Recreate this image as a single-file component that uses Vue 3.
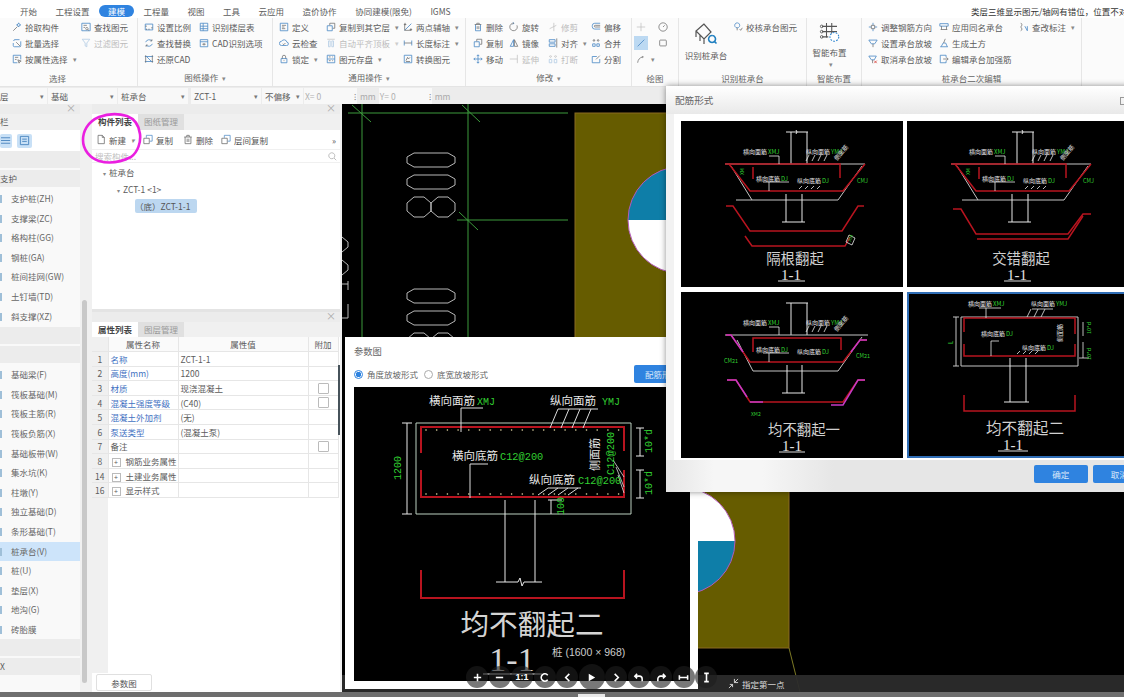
<script setup>
// GTJ 建模界面 + 参数图 / 配筋形式 两个弹窗
const tabs = ['开始', '工程设置', '建模', '工程量', '视图', '工具', '云应用', '造价协作', '协同建模(限免)', 'IGMS']

// 每个图标两层路径：蓝色主体、灰色细节 (12x12)
const icons = {
  pick: ['M8 1l.8 1.7 1.7.8-1.7.8L8 6l-.8-1.7-1.7-.8 1.7-.8z', 'M1.5 10.5L6.5 5.5'],
  batch: ['M2 3.5A1.5 1.5 0 0 1 3.5 2H9M1.5 6v3A1.5 1.5 0 0 0 3 10.5h6A1.5 1.5 0 0 0 10.5 9V4', 'M5 5l5 5'],
  attr: ['M6.5 10.5h-5v-9h9v5', 'M7 7l4 1.5-1.8.7-.7 1.8zM3.5 4h4M3.5 6.5h2'],
  find: ['M1 1.5h10v9H1z', 'M3 4h4M3 6.5h2M7 6.5a1.4 1.4 0 1 0 .1 0M8 9l1.5 1'],
  filter: ['M1.5 1.5h9L7 6v4.5L5 9.5V6z', ''],
  scale: ['M1.5 2.5h9v7h-9z', 'M1.5 5h2M8.5 7h2M3 9.5V8M6 9.5V8'],
  table: ['M1.5 1.5h9v9h-9zM1.5 5h9M1.5 8h9M5 1.5v9', ''],
  replace: ['M9.5 3.5A4.5 4.5 0 0 0 2 5M2.5 8.5A4.5 4.5 0 0 0 10 7', 'M9.5 1.5v2h-2M2.5 10.5v-2h2'],
  cadopt: ['M1.5 2h9v8.5h-9zM1.5 4.5h9', 'M4 7.5h4M6 6v3'],
  restore: ['M1 3h10M1 9h10M3 3l6 6', 'M2 1.5v9M10 1.5v9'],
  define: ['M1.5 1.5h9v9h-9z', 'M3.5 4h5M3.5 6h3M3.5 8h4'],
  cloud: ['M3 9a2.5 2.5 0 0 1 0-5 3.5 3.5 0 0 1 6.5 1 2 2 0 0 1-.5 4z', 'M4.5 7l1.2 1 2-2'],
  lock: ['M2.5 5.5h7v5h-7z', 'M4 5.5v-2a2 2 0 0 1 4 0v2M6 7.5v1'],
  copy: ['M1.5 4.5h6v6h-6z', 'M4.5 4V1.5h6v6H8'],
  flat: ['M3 3.5h2v7H3zM7 3.5h2v7H7z', 'M1.5 1.5h9'],
  save: ['M1.5 1.5h9v9h-9zM1.5 6h9', 'M3.5 3.5h2M3.5 8h2M7.5 3.5h1M7.5 8h1'],
  axis: ['M2 10l8-8', 'M1 3h3M2.5 1v3M8 9h3M9.5 7.5v3M2 10h8M2 2v8'],
  dim: ['M1.5 3v6M10.5 3v6', 'M1.5 6h9'],
  convert: ['M1.5 1.5h9v9h-9z', 'M3.5 8l2-4 1 2 2-2M3.5 9h5'],
  del: ['M3 3v7.5h6V3', 'M2 3h8M4.5 3V1.5h3V3M5 5v3.5M7 5v3.5'],
  move: ['M6 1v10M1 6h10M4.5 2.5L6 1l1.5 1.5M4.5 9.5L6 11l1.5-1.5M2.5 4.5L1 6l1.5 1.5M9.5 4.5L11 6 9.5 7.5', ''],
  rotate: ['M4.5.5L6 1.5 4.5 3', 'M9.5 4A4.5 4.5 0 1 1 6 1.5'],
  mirror: ['M5.5 2v8h-4z', 'M6.5 2v8h4z'],
  trim: ['', 'M7 1v10M2 8l8-4'],
  extend: ['', 'M10 1v10M1 6h9'],
  brk: ['M1.5 6.5h3v4h-3zM7.5 6.5h3v4h-3z', 'M3 2a1 1 0 1 0 .1 0M9 2a1 1 0 1 0 .1 0'],
  alignH: ['M1.5 2h7v3h-7zM1.5 7h7v3h-7z', 'M10.5.5v11'],
  offset: ['M11 1.5H4.5a3 3 0 0 0-3 3v1a3 3 0 0 0 3 3H11', 'M11 4H5a1 1 0 0 0 0 2h6'],
  merge: ['M2 7h3v3H2zM7 7h3v3H7z', 'M3.5 2a1 1 0 1 0 .1 0M8.5 2a1 1 0 1 0 .1 0'],
  split: ['M10.5 6v4.5h-9V3H7', 'M6 6.5L10.5 2'],
  plus: ['', 'M6 1v10M1 6h10'],
  clock: ['', 'M6 1a5 5 0 1 0 .1 0M6 6l2-2'],
  line: ['M2 10l8-8', ''],
  rect: ['', 'M3 2.5h6a1 1 0 0 1 1 1v5a1 1 0 0 1-1 1H3a1 1 0 0 1-1-1v-5a1 1 0 0 1 1-1z'],
  arc: ['', 'M2 10.5A8 8 0 0 1 8 3.5M8 3a.6.6 0 1 0 .1 0'],
  check: ['M5 1a3 3 0 1 0 .1 0', 'M5 7v3M8 8.5L9.2 10l2-3'],
  adjDir: ['M1 6h3M8 6h3M6 1v3M6 8v3', 'M4 4h4v4H4z'],
  same: ['M1 2h10v3H1z', 'M3 5v4M9 5v4M2 9h8'],
  slope: ['M1 2.5h10L8 7H4z', 'M6 7v4'],
  noslope: ['M1 2.5h9L7.5 7H4z', 'M5.5 7v4'],
  earth: ['M1.5 10.5h9M2.5 10.5L5 6h3l2 4.5', 'M7.5 1L5.5 6'],
  strong: ['M8.5 4V1.5h-7v9h7V8', 'M5 6h6M9 4l2 2-2 2'],
  tag: ['M7 5l3 5.5M10 5v5.5', 'M2 1.5c2 0 2 3 0 4.5 2 1.5 2 4 0 4.5']
}

const groups = [
  { w: 138, pad: 12, label: '选择', labelPad: 22, cols: [
    { w: 69, items: [{ t: '拾取构件', i: 'pick' }, { t: '批量选择', i: 'batch' }, { t: '按属性选择', i: 'attr', dd: true }] },
    { items: [{ t: '查找图元', i: 'find' }, { t: '过滤图元', i: 'filter', off: true }] }
  ] },
  { w: 135, pad: 6, label: '图纸操作', dd: true, cols: [
    { w: 55, items: [{ t: '设置比例', i: 'scale' }, { t: '查找替换', i: 'replace' }, { t: '还原CAD', i: 'restore' }] },
    { items: [{ t: '识别楼层表', i: 'table' }, { t: 'CAD识别选项', i: 'cadopt' }] }
  ] },
  { w: 193, pad: 6, label: '通用操作', dd: true, cols: [
    { w: 47, items: [{ t: '定义', i: 'define' }, { t: '云检查', i: 'cloud' }, { t: '锁定', i: 'lock', dd: true }] },
    { w: 77, items: [{ t: '复制到其它层', i: 'copy', dd: true }, { t: '自动平齐顶板', i: 'flat', off: true, dd: true }, { t: '图元存盘', i: 'save', dd: true }] },
    { items: [{ t: '两点辅轴', i: 'axis', dd: true }, { t: '长度标注', i: 'dim', dd: true }, { t: '转换图元', i: 'convert' }] }
  ] },
  { w: 166, pad: 7, label: '修改', dd: true, cols: [
    { w: 36, items: [{ t: '删除', i: 'del' }, { t: '复制', i: 'copy' }, { t: '移动', i: 'move' }] },
    { w: 39, items: [{ t: '旋转', i: 'rotate' }, { t: '镜像', i: 'mirror' }, { t: '延伸', i: 'extend', off: true }] },
    { w: 43, items: [{ t: '修剪', i: 'trim', off: true }, { t: '对齐', i: 'alignH', dd: true }, { t: '打断', i: 'brk', off: true }] },
    { items: [{ t: '偏移', i: 'offset' }, { t: '合并', i: 'merge' }, { t: '分割', i: 'split' }] }
  ] },
  { w: 47, pad: 4, label: '绘图', cols: [
    { w: 22, items: [{ i: 'plus', off: true }, { i: 'line', on: true }, { i: 'arc', dd: true }] },
    { items: [{ i: 'clock' }, { i: 'rect' }] }
  ] },
  { w: 128, label: '识别桩承台', big: { t: '识别桩承台', kind: 'recog', w: 54 }, cols: [
    { items: [{ t: '校核承台图元', i: 'check' }] }
  ] },
  { w: 55, label: '智能布置', big: { t: '智能布置', kind: 'smart', w: 45, dd: true }, cols: [] },
  { w: 220, pad: 6, label: '桩承台二次编辑', cols: [
    { w: 71, items: [{ t: '调整钢筋方向', i: 'adjDir' }, { t: '设置承台放坡', i: 'slope' }, { t: '取消承台放坡', i: 'noslope', x: true }] },
    { w: 80, items: [{ t: '应用同名承台', i: 'same' }, { t: '生成土方', i: 'earth' }, { t: '编辑承台加强筋', i: 'strong' }] },
    { items: [{ t: '查改标注', i: 'tag', dd: true }] }
  ] }
]

const navTop = ['支护桩(ZH)', '支撑梁(ZC)', '格构柱(GG)', '钢桩(GA)', '桩间挂网(GW)', '土钉墙(TD)', '斜支撑(XZ)']
const navBottom = ['基础梁(F)', '筏板基础(M)', '筏板主筋(R)', '筏板负筋(X)', '基础板带(W)', '集水坑(K)', '柱墩(Y)', '独立基础(D)', '条形基础(T)', '桩承台(V)', '桩(U)', '垫层(X)', '地沟(G)', '砖胎膜']

const props = [
  { n: 1, name: '名称', val: 'ZCT-1-1', link: true },
  { n: 2, name: '高度(mm)', val: '1200', link: true },
  { n: 3, name: '材质', val: '现浇混凝土', link: true, box: true },
  { n: 4, name: '混凝土强度等级', val: '(C40)', link: true, box: true },
  { n: 5, name: '混凝土外加剂', val: '(无)', link: true },
  { n: 6, name: '泵送类型', val: '(混凝土泵)', link: true },
  { n: 7, name: '备注', val: '', box: true },
  { n: 8, name: '钢筋业务属性', val: '', plus: true },
  { n: 14, name: '土建业务属性', val: '', plus: true },
  { n: 16, name: '显示样式', val: '', plus: true }
]

// CAD 画布上的灰色八边形
const octY = [49, 71, 185, 207]
const octPairY = [93, 229]
const octPts = (y) => `72,${y} 106,${y} 113,${y + 4} 113,${y + 10} 106,${y + 14} 72,${y + 14} 65,${y + 10} 65,${y + 4}`
const octSmall = (x, y) => `${x + 7},${y} ${x + 17},${y} ${x + 24},${y + 6} ${x + 24},${y + 14} ${x + 17},${y + 20} ${x + 7},${y + 20} ${x},${y + 14} ${x},${y + 6}`

const W = '#e8e8e8'
const G = '#c4c4c4'
const R = '#b8141f'
const M = '#c53ac5'
const L = '#32d032'

const commonLabels = (y1 = 33, y2 = 60, y3 = 62, dx = 0) => [
  { x: 62 + dx, y: y1, t: '横向面筋', c: W, s: 6 },
  { x: 87 + dx, y: y1, t: 'XMJ', c: L, s: 6 },
  { x: 125 + dx, y: y1, t: '纵向面筋', c: W, s: 6 },
  { x: 150 + dx, y: y1, t: 'YMJ', c: L, s: 6 },
  { x: 75 + dx, y: y2, t: '横向底筋', c: W, s: 6 },
  { x: 100 + dx, y: y2, t: 'DJ', c: L, s: 6 },
  { x: 116 + dx, y: y3, t: '纵向底筋', c: W, s: 6 },
  { x: 141 + dx, y: y3, t: 'DJ', c: L, s: 6 }
]

const slabCommon = [
  { d: 'M105 11H127M110 11V43M126 11V43M115 9l1 2-1 2', c: W, w: 1 },
  { d: 'M44 43H184M50 45L71 79H55M71 79H157L181 45', c: G, w: 1 },
  { d: 'M44 43H159V57M72 46V58', c: R, w: 1.5 },
  { d: 'M48 43L69 70H162L184 43', c: R, w: 1.5 },
  { d: 'M105 73V101M121 73V101M101 101H124', c: W, w: 1 },
  { d: 'M98 35V43M88 35H98M125 40l3-6M131 40l3-6M137 40l3-6M143 40l3-6', c: W, w: .8 },
  { d: 'M88 61V70M82 61H108M118 68l3-3M124 68l3-3M130 68l3-3M136 68l3-3', c: W, w: .8 }
]

const thumbs = [
  {
    title: '隔根翻起', tx: 114, ty: 143, ux: [97, 124], uy: 160, nx: 110, ny: 159,
    lines: [
      ...slabCommon,
      { d: 'M45 85H52L69 110H161L177 85H183', c: R, w: 1.5 },
      { d: 'M64 115L71 125H164L169 116', c: R, w: 1.5 },
      { d: 'M168 114l6 3-3 7-6-3z', c: W, w: .8 }
    ],
    labels: [...commonLabels(), { x: 170, y: 121, t: 'XM', c: L, s: 5, r: -70 }, { x: 63, y: 54, t: 'XM', c: L, s: 5, r: -90 }, { x: 156, y: 40, t: '侧面筋', c: W, s: 6, r: -50 }, { x: 176, y: 62, t: 'CMJ', c: L, s: 5.5 }]
  },
  {
    title: '交错翻起', tx: 114, ty: 143, ux: [97, 124], uy: 160, nx: 110, ny: 159,
    lines: [
      ...slabCommon,
      { d: 'M46 88H54L69 113H161L176 93H184', c: R, w: 1.5 },
      { d: 'M70 118H161L176 95', c: R, w: 1.5 }
    ],
    labels: [...commonLabels(), { x: 63, y: 54, t: 'XM', c: L, s: 5, r: -90 }, { x: 156, y: 40, t: '侧面筋', c: W, s: 6, r: -50 }, { x: 176, y: 62, t: 'CMJ', c: L, s: 5.5 }]
  },
  {
    title: '均不翻起一', tx: 123, ty: 143, ux: [98, 124], uy: 160, nx: 111, ny: 159,
    lines: [
      { d: 'M105 11H127M110 11V43M126 11V43', c: W, w: 1 },
      { d: 'M44 43H187M56 48L72 79H157L181 45', c: G, w: 1 },
      { d: 'M45 43H50L69 70H162L179 48H186', c: R, w: 1.5 },
      { d: 'M45 43H50L62 60M170 60L179 48H186', c: M, w: 1.5 },
      { d: 'M72 60V46H160V58', c: R, w: 1.5 },
      { d: 'M106 73V101M121 73V101M101 101H124', c: W, w: 1 },
      { d: 'M46 88H55L69 110H162L177 88H184', c: R, w: 1.5 },
      { d: 'M46 88H55L66 105M69 110H82M150 113H162L177 88H184', c: M, w: 1.5 },
      { d: 'M98 35V43M88 35H98M125 40l3-6M131 40l3-6M137 40l3-6M143 40l3-6M88 61V70M82 61H108', c: W, w: .8 }
    ],
    labels: [...commonLabels(), { x: 43, y: 71, t: 'CM21', c: L, s: 5.5 }, { x: 175, y: 66, t: 'CM21', c: L, s: 5.5 }, { x: 70, y: 124, t: 'XM2', c: L, s: 5 }, { x: 156, y: 40, t: '侧面筋', c: W, s: 6, r: -50 }]
  },
  {
    title: '均不翻起二', tx: 118, ty: 142, ux: [91, 121], uy: 159, nx: 106, ny: 158, big: true,
    lines: [
      { d: 'M54 25H171V74H54ZM49 25V74M46 25H52M46 74H52', c: G, w: 1 },
      { d: 'M57 40V26H168V42M57 52V64H168V52', c: R, w: 1.5 },
      { d: 'M103 66V110M119 66V110M97 110H122', c: W, w: 1 },
      { d: 'M57 103V119H168V103', c: R, w: 1.5 },
      { d: 'M79 16V26M72 16H94M120 25l4-8M127 25l4-8M134 25l4-8M125 17H146M84 49V64M84 49H92M110 62l3-3M116 62l3-3M122 62l3-3M128 62l3-3', c: W, w: .8 },
      { d: 'M176 30V44M176 50V66M172 66H182', c: W, w: .8 }
    ],
    labels: [...commonLabels(14, 44, 58, -1), { x: 46, y: 52, t: 'L', c: L, s: 6, r: -90 }, { x: 184, y: 42, t: '10*d', c: L, s: 5.5, r: -90 }, { x: 184, y: 68, t: '10*d', c: L, s: 5.5, r: -90 }, { x: 155, y: 50, t: '侧面筋', c: W, s: 6, r: -90 }]
  }
]

// 参数图主图
const paramLines = [
  { d: 'M62 36H277V127H62Z', c: '#bcd0c0', w: 1 },
  { d: 'M67 66V40H270V64M67 83V110H270V83', c: R, w: 2 },
  { d: 'M151 113V195M181 113V195M142 195H164l2-4 2 8 2-4H188', c: W, w: 1 },
  { d: 'M67 183V211H270V183', c: R, w: 2 },
  { d: 'M53 36V127M48 36H58M48 127H58', c: W, w: 1 },
  { d: 'M286 41V69M282 41H290M282 69H290M286 83V111M282 83H290M282 111H290', c: W, w: 1 },
  { d: 'M194 113H208M197 113V127', c: W, w: 1 },
  { d: 'M107 21H129M107 21V45M116 77H134M116 77V111', c: '#ddd', w: 1 },
  { d: 'M204 22H244M204 22L196 41M215 22L207 41M226 22L218 41M237 22L229 41', c: '#ddd', w: 1 },
  { d: 'M194 101H227M194 101L184 108M204 101L194 108M214 101L204 108M224 101L214 108', c: '#ddd', w: 1 },
  { d: 'M259 73L270 90M262 80L270 100M264 88L270 106', c: '#ddd', w: .8 },
  { d: 'M129 287H188', c: W, w: 1 }
]
const paramLabels = [
  { x: 75, y: 18, t: '横向面筋', c: W, s: 11.5 },
  { x: 123, y: 18, t: 'XMJ', c: L, s: 10, m: true },
  { x: 196, y: 18, t: '纵向面筋', c: W, s: 11.5 },
  { x: 248, y: 18, t: 'YMJ', c: L, s: 10, m: true },
  { x: 98, y: 73, t: '横向底筋', c: W, s: 11.5 },
  { x: 146, y: 73, t: 'C12@200', c: L, s: 10.3, m: true },
  { x: 175, y: 97, t: '纵向底筋', c: W, s: 11.5 },
  { x: 224, y: 97, t: 'C12@200', c: L, s: 10.3, m: true },
  { x: 245, y: 84, t: '侧面筋', c: W, s: 11, r: -90 },
  { x: 260, y: 88, t: 'C12@200', c: L, s: 10.3, r: -90, m: true },
  { x: 47, y: 93, t: '1200', c: L, s: 10, r: -90, m: true },
  { x: 298, y: 66, t: '10*d', c: L, s: 10, r: -90, m: true },
  { x: 298, y: 108, t: '10*d', c: L, s: 10, r: -90, m: true },
  { x: 210, y: 128, t: '100', c: L, s: 10, r: -90, m: true }
]
const dots = Array.from({ length: 19 }, (_, i) => 72 + i * 10.7)
</script>

<template>
  <div class="screen">
    <div class="tabs">
      <span v-for="t in tabs" :key="t" :class="['tab', { active: t === '建模' }]">{{ t }}</span>
      <span class="notice">类层三维显示图元/轴网有错位，位置不对如</span>
    </div>

    <div class="ribbon">
      <section v-for="g in groups" :key="g.label" class="group" :style="{ width: g.w + 'px' }">
        <div class="group-body" :style="{ paddingLeft: (g.pad || 0) + 'px' }">
          <div v-if="g.big" class="big" :style="{ width: g.big.w + 'px' }">
            <svg v-if="g.big.kind === 'recog'" width="24" height="22" viewBox="0 0 24 22" class="big-ic">
              <path d="M10 1L2 8l8 8 7-7zM2 8v6M10 16v5M6 12v6" fill="none" stroke="#555" stroke-width="1.2" />
              <path d="M18 12.5a3.5 3.5 0 1 0 .1 0M20.5 18.5l2 2" fill="none" stroke="#1f7fc0" stroke-width="1.6" />
            </svg>
            <svg v-else width="24" height="24" viewBox="0 0 24 24" class="big-ic">
              <path d="M8 1v17M14 1v17M3 5h17M3 11h17M3 17h7" fill="none" stroke="#555" stroke-width="1.2" />
              <circle cx="2.5" cy="5" r="1.5" fill="none" stroke="#555" />
              <circle cx="2.5" cy="11" r="1.5" fill="none" stroke="#555" />
              <circle cx="2.5" cy="17" r="1.5" fill="none" stroke="#555" />
              <circle cx="17" cy="17" r="5" fill="#fff" stroke="#2f86d0" stroke-dasharray="2 1.5" stroke-width="1.3" />
            </svg>
            <span>{{ g.big.t }}</span>
            <span v-if="g.big.dd" class="caret">▾</span>
          </div>
          <div v-for="(c, ci) in g.cols" :key="ci" class="col" :style="c.w ? { width: c.w + 'px' } : null">
            <div v-for="(it, ii) in c.items" :key="ii" :class="['cmd', { off: it.off, on: it.on }]">
              <svg class="ic" viewBox="0 0 12 12">
                <path :d="icons[it.i][0]" class="ic-a" />
                <path :d="icons[it.i][1]" class="ic-b" />
                <path v-if="it.x" d="M7.5 8l3 3M10.5 8l-3 3" class="ic-x" />
              </svg>
              <span v-if="it.t">{{ it.t }}</span>
              <span v-if="it.dd" class="caret">▾</span>
            </div>
          </div>
        </div>
        <div class="group-label" :style="g.labelPad ? { paddingRight: g.labelPad + 'px' } : null">
          {{ g.label }}<span v-if="g.dd" class="caret"> ▾</span>
        </div>
      </section>
    </div>

    <div class="optbar">
      <div class="drop w-first">层<i>▾</i></div>
      <div class="drop w-a">基础<i>▾</i></div>
      <div class="drop w-b">桩承台<i>▾</i></div>
      <div class="drop w-c">ZCT-1<i>▾</i></div>
      <div class="drop w-d">不偏移<i>▾</i></div>
      <div class="num"><em>X=</em> <em>0</em><b>⁝</b></div>
      <span class="unit">mm</span>
      <div class="num"><em>Y=</em> <em>0</em><b>⁝</b></div>
      <span class="unit">mm</span>
    </div>

    <div class="work">
      <aside class="nav">
        <div class="nav-list">
          <div class="strip"><span class="close">×</span></div>
          <div class="nav-title">栏</div>
          <div class="nav-tools">
            <span class="toggle t-a">
              <svg viewBox="0 0 12 12" width="11" height="11"><path d="M0 3h10M0 6h10M0 9h10" stroke="#4a86c0" fill="none" /></svg>
            </span>
            <span class="toggle t-b">
              <svg viewBox="0 0 12 12" width="11" height="11"><path d="M1.5 1.5h9v9h-9zM3.5 4.5h5M3.5 7h5" stroke="#4a86c0" fill="none" /></svg>
            </span>
          </div>
          <div class="nav-head first"></div>
          <div class="nav-head">支护</div>
          <div v-for="n in navTop" :key="n" class="nav-item">{{ n }}</div>
          <div class="nav-head gap"></div>
          <div class="nav-head"></div>
          <div v-for="n in navBottom" :key="n" :class="['nav-item', { sel: n === '桩承台(V)' }]">{{ n }}</div>
          <div class="nav-head"></div>
          <div class="nav-head">X</div>
        </div>
        <div class="nav-gutter"><div class="nav-thumb"></div></div>
      </aside>

      <div class="mid">
        <div class="panel upper">
          <div class="strip"><span class="close">×</span></div>
          <div class="pane-tabs">
            <span class="pane-tab active">构件列表</span>
            <span class="pane-tab">图纸管理</span>
          </div>
          <div class="toolbar">
            <span class="tb new">
              <svg class="tb-ic" viewBox="0 0 12 12"><path d="M2.5 1h5L10 3.5V11H2.5zM7.5 1v2.5H10" /></svg>新建<i class="caret">▾</i>
            </span>
            <span class="tb copy">
              <svg class="tb-ic" viewBox="0 0 12 12"><path d="M1 4.5h6.5V11H1z" /><path class="blue" d="M4 4V1h7v7H8" /></svg>复制
            </span>
            <span class="tb del">
              <svg class="tb-ic" viewBox="0 0 12 12"><path d="M1.5 3h9M4.5 3V1h3v2M2.5 3v8h7V3M5 5v4M7 5v4" /></svg>删除
            </span>
            <span class="tb">
              <svg class="tb-ic" viewBox="0 0 12 12"><path d="M1 4.5h6.5V11H1z" /><path class="blue" d="M4 4V1h7v7H8" /></svg>层间复制
            </span>
            <span class="more">»</span>
          </div>
          <div class="search">
            <span>搜索构件...</span>
            <svg viewBox="0 0 12 12" width="9" height="9"><path d="M5 1a4 4 0 1 0 .1 0M8 8l3 3" fill="none" stroke="#aaa" /></svg>
          </div>
          <div class="tree">
            <div class="node n1"><i>▾</i>桩承台</div>
            <div class="node n2"><i>▾</i>ZCT-1 &lt;1&gt;</div>
            <div class="node n3"><span>（底）ZCT-1-1</span></div>
          </div>
        </div>

        <div class="panel lower">
          <div class="strip"><span class="close">×</span></div>
          <div class="pane-tabs">
            <span class="pane-tab active">属性列表</span>
            <span class="pane-tab">图层管理</span>
          </div>
          <table class="attr">
            <colgroup>
              <col class="c-n"><col class="c-name"><col class="c-val"><col class="c-add">
            </colgroup>
            <thead>
              <tr><th></th><th>属性名称</th><th>属性值</th><th>附加</th></tr>
            </thead>
            <tbody>
              <tr v-for="p in props" :key="p.n">
                <td class="no">{{ p.n }}</td>
                <td :class="{ link: p.link }"><span v-if="p.plus" class="plus">+</span>{{ p.name }}</td>
                <td>{{ p.val }}</td>
                <td class="box"><span v-if="p.box" class="chk"></span></td>
              </tr>
            </tbody>
          </table>
          <div class="attr-fill"><div class="attr-fill-no"></div></div>
          <div class="attr-foot"><button class="ghost">参数图</button></div>
          <div class="edge-bar"></div>
        </div>
      </div>

      <div class="canvas">
        <svg class="cad" width="782" height="588" viewBox="0 0 782 588">
          <rect x="233" y="9" width="214" height="535" fill="#665c00" stroke="#8a6a20" />
          <path d="M286 116A53.5 53.5 0 0 1 393 116Z" fill="#0e7ea8" />
          <path d="M286 116A53.5 53.5 0 0 0 393 116Z" fill="#fff" />
          <circle cx="339.5" cy="116" r="53.5" fill="none" stroke="#b45ab8" />
          <path d="M286 437A53.5 53.5 0 0 1 393 437Z" fill="#fff" />
          <path d="M286 437A53.5 53.5 0 0 0 393 437Z" fill="#0e7ea8" />
          <circle cx="339.5" cy="437" r="53.5" fill="none" stroke="#b45ab8" />
          <path d="M447 544L458 588" stroke="#7d7a25" fill="none" />
          <g stroke="#3c9a3c" fill="none">
            <path d="M20 0V340M126 0V340M6 9H226M115 116H226" />
            <path d="M10 1L29 18M120 1L138 18M117 108L136 126" />
          </g>
          <g stroke="#b8b8b8" fill="none">
            <polygon v-for="y in octY" :key="y" :points="octPts(y)" />
            <template v-for="y in octPairY" :key="y">
              <polygon :points="octSmall(65, y)" />
              <polygon :points="octSmall(89, y)" />
            </template>
            <path d="M0 133L6 138 6 143 0 148M0 156L6 161 6 166 0 171M0 180H6M6 177V186M0 214H6V200" />
          </g>
        </svg>
        <div class="hint">
          <svg viewBox="0 0 12 12" width="11" height="11"><path d="M1 11L5 7M2 7h3v3M11 1L7 5M7 1v4h4" stroke="#ddd" fill="none" /></svg>
          <span>指定第一点</span>
        </div>
      </div>
    </div>
    <div class="foot"></div>

    <!-- 参数图弹窗 -->
    <div class="dlg-param">
      <div class="dlg-title">参数图</div>
      <div class="radios">
        <label class="radio sel"><i></i>角度放坡形式</label>
        <label class="radio"><i></i>底宽放坡形式</label>
        <button class="primary wide">配筋形式</button>
      </div>
      <svg class="param-pic" width="336" height="294" viewBox="0 0 336 294">
        <path v-for="(l, i) in paramLines" :key="i" :d="l.d" :stroke="l.c" :stroke-width="l.w" fill="none" />
        <circle v-for="x in dots" :key="'a' + x" :cx="x" cy="43" r=".8" fill="#e8dca8" />
        <circle v-for="x in dots" :key="'b' + x" :cx="x" cy="107" r=".8" fill="#e8dca8" />
        <text v-for="(l, i) in paramLabels" :key="i" :class="l.m ? 'mono' : 'cjk'" :x="l.x" :y="l.y" :fill="l.c" :font-size="l.s"
          :transform="l.r ? `rotate(${l.r} ${l.x} ${l.y})` : null">{{ l.t }}</text>
        <text class="cjk" x="178" y="248" fill="#d4d4d4" font-size="28.6" text-anchor="middle">均不翻起二</text>
        <text class="latin" x="158" y="284" fill="#d4d4d4" font-size="34" text-anchor="middle">1-1</text>
      </svg>
    </div>

    <!-- 配筋形式弹窗 -->
    <div class="dlg-rebar">
      <div class="rebar-title">配筋形式<span class="max"></span></div>
      <div class="rebar-body">
        <div class="thumbs">
          <div v-for="(t, ti) in thumbs" :key="t.title" :class="['thumb', { sel: ti === 3 }]">
            <svg width="222" height="166" viewBox="0 0 222 166">
              <path v-for="(l, i) in t.lines" :key="i" :d="l.d" :stroke="l.c" :stroke-width="l.w" fill="none" />
              <text v-for="(l, i) in t.labels" :key="i" class="cjk" :x="l.x" :y="l.y" :fill="l.c" :font-size="l.s"
                :transform="l.r ? `rotate(${l.r} ${l.x} ${l.y})` : null">{{ l.t }}</text>
              <text class="cjk" :x="t.tx" :y="t.ty" fill="#d0d0d0" :font-size="t.big ? 15.6 : 14.4" text-anchor="middle">{{ t.title }}</text>
              <text class="latin" :x="t.nx" :y="t.ny" fill="#e0e0e0" font-size="15" text-anchor="middle">1-1</text>
              <path :d="`M${t.ux[0]} ${t.uy}H${t.ux[1]}`" stroke="#ddd" fill="none" />
            </svg>
          </div>
        </div>
      </div>
      <div class="rebar-foot">
        <button class="primary">确定</button>
        <button class="primary">取消</button>
      </div>
    </div>

    <!-- 看图工具条（悬浮） -->
    <div class="viewer-caption">桩 (1600 × 968)</div>
    <div class="viewer-bar">
      <button class="vb"><svg viewBox="0 0 12 12"><path d="M6 2v8M2 6h8" /></svg></button>
      <button class="vb"><svg viewBox="0 0 12 12"><path d="M2 6h8" /></svg></button>
      <button class="vb txt">1:1</button>
      <button class="vb"><svg viewBox="0 0 12 12"><path d="M9.5 3.5a4 4 0 1 0 0 5" /></svg></button>
      <button class="vb"><svg viewBox="0 0 12 12"><path d="M8 2L4 6l4 4" /></svg></button>
      <button class="vb play"><svg viewBox="0 0 12 12"><path d="M3 2l7 4-7 4z" class="fill" /></svg></button>
      <button class="vb"><svg viewBox="0 0 12 12"><path d="M4 2l4 4-4 4" /></svg></button>
      <button class="vb"><svg viewBox="0 0 12 12"><path d="M4.5 2L2 4.5 4.5 7M2 4.500h5a3 3 0 0 1 3 3V10" /></svg></button>
      <button class="vb"><svg viewBox="0 0 12 12"><path d="M7.5 2L10 4.5 7.500 7M10 4.500H5a3 3 0 0 0-3 3V10" /></svg></button>
      <button class="vb"><svg viewBox="0 0 12 12"><path d="M1.5 6h9M1.5 3.500v5M10.5 3.500v5" /></svg></button>
      <button class="vb"><svg viewBox="0 0 12 12"><path d="M6 1.5v9M3.500 1.5h5M3.500 10.500h5" /></svg></button>
    </div>
    <div class="viewer-pill"></div>

    <!-- 截图上手画的洋红圈 -->
    <svg class="scribble" width="70" height="60" viewBox="0 0 70 60">
      <path d="M18 5C26 2 36 1 46 4C54 7 58 14 59 22C60 30 57 40 50 45C40 50 28 52 18 49C9 46 2 38 2 28C2 20 6 10 18 5" fill="none" stroke="#ea1fe0" stroke-width="2.6" stroke-linecap="round" />
    </svg>
  </div>
</template>

<style>
body {
  background: #f0f0f0;
}
</style>

<style scoped>
.screen {
  position: relative;
  width: 1124px;
  height: 697px;
  overflow: hidden;
  display: flex;
  flex-direction: column;
  background: #f0f0f0;
  font-family: "Noto Sans CJK SC", "Liberation Sans", sans-serif;
  font-size: 8.5px;
  color: #5c5c5c;
}

/* 顶部页签 */
.tabs {
  height: 18px;
  flex: none;
  display: flex;
  align-items: center;
  gap: 18.5px;
  padding: 4px 0 0 20px;
  box-sizing: border-box;
  background: #fff;
  white-space: nowrap;
}

.tab {
  line-height: 12px;
}

.tab.active {
  margin: 0 -9px;
  padding: 0 9px;
  border-radius: 7px;
  background: #2f83e0;
  color: #fff;
}

.notice {
  position: absolute;
  left: 971px;
  top: 5px;
  color: #333;
  line-height: 12px;
  white-space: nowrap;
}

/* 功能区 */
.ribbon {
  height: 69px;
  flex: none;
  display: flex;
  background: #fbfbfb;
  border-bottom: 1px solid #e4e4e4;
  box-sizing: border-box;
}

.group {
  flex: none;
  display: flex;
  flex-direction: column;
  border-right: 1px solid #e6e6e6;
  box-sizing: border-box;
}

.group-body {
  height: 51px;
  padding-top: 1px;
  display: flex;
}

.group-label {
  text-align: center;
  line-height: 16px;
  color: #666;
}

.col {
  flex: none;
  display: flex;
  flex-direction: column;
}

.cmd {
  height: 16px;
  display: flex;
  align-items: center;
  gap: 3px;
  white-space: nowrap;
}

.cmd.off {
  opacity: .4;
}

.cmd.on .ic {
  background: #bcd9f2;
  outline: 2px solid #bcd9f2;
}

.ic {
  width: 10px;
  height: 10px;
  flex: none;
}

.ic-a {
  fill: none;
  stroke: #4f8cc6;
  stroke-width: 1;
}

.ic-b {
  fill: none;
  stroke: #6d6d6d;
  stroke-width: .9;
}

.ic-x {
  fill: none;
  stroke: #d9413a;
  stroke-width: 1;
}

.caret {
  color: #888;
  font-size: 7px;
  margin-left: 2px;
}

.big {
  flex: none;
  display: flex;
  flex-direction: column;
  align-items: center;
  text-align: center;
  line-height: 12px;
  white-space: nowrap;
}

.big-ic {
  margin-top: 3px;
  margin-bottom: 3px;
  height: 24px;
}

/* 属性选择条 */
.optbar {
  height: 17px;
  flex: none;
  display: flex;
  align-items: center;
  gap: 1px;
  background: #ececec;
}

.drop,
.num {
  position: relative;
  height: 16px;
  line-height: 16px;
  background: #f8f8f8;
  box-sizing: border-box;
  padding-left: 3px;
  white-space: nowrap;
}

.drop i {
  position: absolute;
  right: 3px;
  top: 0;
  font-style: normal;
  font-size: 7px;
  color: #777;
}

.w-first {
  width: 47px;
  padding-left: 0;
}

.w-a {
  width: 69px;
}

.w-b {
  width: 70px;
  margin-right: 2px;
}

.w-c {
  width: 70px;
}

.w-d {
  width: 41px;
}

.num {
  width: 53px;
  padding-left: 1px;
  color: #b0b0b0;
}

.num em {
  font-style: normal;
}

.num b {
  position: absolute;
  right: 1px;
  top: 0;
  font-weight: 400;
  color: #777;
}

.unit {
  padding: 0 2px;
  color: #aaa;
}

/* 主区域 */
.work {
  flex: 1;
  min-height: 0;
  display: flex;
}

.foot {
  height: 5px;
  flex: none;
  background: #6e6e6e;
}

.strip {
  position: relative;
  height: 10px;
  background: #ececec;
}

.close {
  position: absolute;
  right: 4px;
  top: -2px;
  color: #aaa;
  font-size: 10px;
  line-height: 12px;
}

.nav {
  width: 92px;
  flex: none;
  display: flex;
}

.nav-list {
  width: 80px;
  flex: none;
  background: #f9f9f9;
}

.nav-title {
  height: 16px;
  line-height: 15px;
  background: #f0f0f0;
}

.nav-tools {
  height: 21px;
  display: flex;
  align-items: center;
  gap: 5px;
  background: #fff;
}

.toggle {
  height: 14px;
  display: flex;
  align-items: center;
  justify-content: center;
  border-radius: 2px;
  background: #c8e0f6;
}

.t-a {
  width: 12px;
}

.t-b {
  width: 15px;
}

.nav-head {
  height: 17px;
  line-height: 17px;
  margin-bottom: 2px;
  background: #ececec;
}

.nav-head.gap {
  margin-top: 1px;
}

.nav-item {
  position: relative;
  height: 19.6px;
  line-height: 19.6px;
  padding-left: 11px;
  color: #666;
  white-space: nowrap;
}

.nav-item::before {
  content: "";
  position: absolute;
  left: 0;
  top: 6px;
  width: 2px;
  height: 8px;
  background: #9fbfd8;
}

.nav-item.sel {
  background: #cde4fa;
}

.nav-gutter {
  width: 12px;
  padding: 196px 0 0 2px;
  box-sizing: border-box;
}

.nav-thumb {
  width: 5px;
  height: 383px;
  border-radius: 3px;
  background: #c8c8c8;
}

.mid {
  width: 248px;
  flex: none;
  display: flex;
  flex-direction: column;
  gap: 3px;
  background: #e4e4e4;
}

.panel {
  position: relative;
  display: flex;
  flex-direction: column;
  background: #fff;
}

.upper {
  height: 205px;
  flex: none;
}

.lower {
  flex: 1;
  min-height: 0;
}

.pane-tabs {
  height: 16px;
  flex: none;
  display: flex;
  background: #f0f0f0;
}

.lower .pane-tabs {
  height: 15px;
}

.pane-tab {
  width: 46px;
  line-height: 15px;
  text-align: center;
  background: #e0e0e0;
  color: #999;
}

.pane-tab.active {
  background: #fff;
  color: #444;
  font-weight: 700;
}

.toolbar {
  height: 20px;
  flex: none;
  display: flex;
  align-items: center;
  padding-left: 4px;
  border-bottom: 1px solid #f0f0f0;
  box-sizing: border-box;
  color: #555;
}

.tb {
  display: flex;
  align-items: center;
  gap: 3px;
  white-space: nowrap;
}

.tb.new {
  width: 47px;
}

.tb.copy {
  width: 40px;
}

.tb.del {
  width: 38px;
}

.tb-ic {
  width: 10px;
  height: 11px;
  fill: none;
  stroke: #666;
  stroke-width: .9;
}

.tb-ic .blue {
  stroke: #4f8cc6;
}

.more {
  margin-left: auto;
  margin-right: 4px;
  color: #555;
}

.search {
  height: 13px;
  flex: none;
  display: flex;
  align-items: center;
  justify-content: space-between;
  padding: 0 3px;
  color: #c0c0c0;
  line-height: 13px;
  border-bottom: 1px solid #f0f0f0;
  box-sizing: border-box;
}

.tree {
  padding-top: 1px;
  line-height: 17px;
}

.node {
  white-space: nowrap;
  height: 17px;
}

.node i {
  font-style: normal;
  font-size: 6px;
  margin-right: 3px;
  color: #888;
}

.n1 {
  padding-left: 11px;
}

.n2 {
  padding-left: 25px;
}

.n3 {
  padding-left: 43px;
}

.n3 span {
  display: inline-block;
  width: 62px;
  height: 14px;
  line-height: 14px;
  border-radius: 2px;
  background: #bcd7f0;
  color: #555;
}

/* 属性表 */
.attr {
  width: 246px;
  flex: none;
  border-collapse: collapse;
  table-layout: fixed;
}

.c-n {
  width: 16px;
}

.c-name {
  width: 70px;
}

.c-val {
  width: 130px;
}

.c-add {
  width: 30px;
}

.attr th,
.attr td {
  height: 14.6px;
  padding: 0 2px;
  box-sizing: border-box;
  border: 1px solid #e6e6e6;
  border-width: 0 1px 1px 0;
  font-size: 8.5px;
  font-weight: 400;
  line-height: 12px;
  color: #5c5c5c;
  white-space: nowrap;
  overflow: hidden;
}

.attr th {
  text-align: center;
  background: #fafafa;
}

.attr .no {
  text-align: center;
  background: #f0f0f0;
  padding: 0;
}

.attr th:first-child {
  background: #f0f0f0;
}

.attr .link {
  color: #3f72c2;
}

.plus {
  display: inline-block;
  width: 7px;
  height: 7px;
  line-height: 6px;
  margin: 0 5px 0 1px;
  text-align: center;
  font-size: 7px;
  border: 1px solid #bbb;
}

.box {
  text-align: center;
}

.chk {
  display: block;
  width: 9px;
  height: 9px;
  margin: 0 auto;
  border: 1px solid #bbb;
  border-radius: 1px;
}

.attr-fill {
  flex: 1;
  min-height: 0;
  display: flex;
}

.attr-fill-no {
  width: 16px;
  background: #f0f0f0;
}

.attr-foot {
  height: 19px;
  flex: none;
  padding: 1px 0 0 4px;
  box-sizing: border-box;
}

.ghost {
  display: block;
  width: 56px;
  height: 17px;
  padding: 0;
  font: inherit;
  color: #555;
  background: #fff;
  border: 1px solid #e0e0e0;
  border-radius: 2px;
}

.edge-bar {
  position: absolute;
  right: 0;
  top: 53px;
  width: 2px;
  height: 70px;
  background: #46525a;
}

.canvas {
  position: relative;
  flex: 1;
  min-width: 0;
  margin-left: 2px;
  overflow: hidden;
  background: #000;
}

.cad {
  display: block;
}

.hint {
  position: absolute;
  left: 0;
  right: 0;
  bottom: 0;
  height: 17px;
  display: flex;
  align-items: center;
  gap: 3px;
  padding-left: 386px;
  color: #ddd;
  background: rgba(44, 44, 44, .94);
}

/* 参数图 */
.dlg-param {
  position: absolute;
  left: 345px;
  top: 337px;
  width: 353px;
  height: 352px;
  padding: 0 8px 0 9px;
  box-sizing: border-box;
  background: #fff;
}

.dlg-title {
  height: 28px;
  line-height: 28px;
  font-size: 9.3px;
  color: #666;
}

.radios {
  height: 18px;
  margin-bottom: 4px;
  display: flex;
  align-items: center;
  gap: 6px;
}

.radio {
  display: flex;
  align-items: center;
  gap: 4px;
  color: #666;
}

.radio i {
  width: 9px;
  height: 9px;
  box-sizing: border-box;
  border: 1px solid #aaa;
  border-radius: 50%;
  background: #fff;
}

.radio.sel i {
  border-color: #2f83e0;
  background: radial-gradient(circle, #2f83e0 0 2.5px, #fff 3px);
}

.primary {
  height: 18px;
  padding: 0;
  font: inherit;
  color: #dbe9fa;
  background: #2f83e0;
  border: 0;
  border-radius: 2px;
}

.wide {
  width: 56px;
  margin-left: auto;
}

.param-pic {
  display: block;
  background: #000;
}

.cjk {
  font-family: "Noto Sans CJK SC", sans-serif;
}

.mono {
  font-family: "Liberation Mono", monospace;
}

.latin {
  font-family: "Liberation Serif", serif;
}

/* 配筋形式 */
.dlg-rebar {
  position: absolute;
  left: 666px;
  top: 86px;
  width: 480px;
  height: 406px;
  display: flex;
  flex-direction: column;
  background: #f2f2f2;
  box-shadow: 0 0 6px rgba(0, 0, 0, .45);
}

.rebar-title {
  position: relative;
  height: 28px;
  flex: none;
  line-height: 28px;
  padding-left: 9px;
  font-size: 9.6px;
  color: #666;
  background: linear-gradient(#fff, #e9e9e9);
}

.max {
  position: absolute;
  left: 454px;
  top: 11px;
  width: 6px;
  height: 6px;
  border: 1px solid #999;
}

.rebar-body {
  height: 346px;
  flex: none;
  margin-left: 8px;
  padding: 7px 0 0 7px;
  box-sizing: border-box;
  background: #fff;
}

.thumbs {
  display: grid;
  grid-template-columns: 222px 222px;
  grid-auto-rows: 166px;
  gap: 5px 4px;
}

.thumb {
  position: relative;
  background: #000;
}

.thumb svg {
  display: block;
}

.thumb.sel {
  outline: 2px solid #2f6db5;
  outline-offset: -2px;
}

.rebar-foot {
  flex: 1;
  display: flex;
  align-items: flex-start;
  gap: 5px;
  padding: 5px 0 0 368px;
  background: linear-gradient(90deg, #e6e6e6, #f6f6f6 10%, #f6f6f6 20%, #e6e6e6 35%);
}

.rebar-foot .primary {
  width: 54px;
}

/* 看图工具条 */
.viewer-caption {
  position: absolute;
  left: 552px;
  top: 645px;
  color: #ccc;
  font-size: 10.5px;
  line-height: 14px;
  font-family: "Liberation Sans", "Noto Sans CJK SC", sans-serif;
  white-space: nowrap;
}

.viewer-bar {
  position: absolute;
  left: 466px;
  top: 664px;
  display: flex;
  align-items: center;
  gap: .5px;
}

.vb {
  width: 22px;
  height: 22px;
  flex: none;
  display: flex;
  align-items: center;
  justify-content: center;
  padding: 0;
  border: 0;
  border-radius: 50%;
  background: rgba(30, 30, 30, .6);
  color: #fff;
  font: 700 9px "Liberation Sans", sans-serif;
}

.vb.play {
  width: 26px;
  height: 26px;
}

.vb svg {
  width: 11px;
  height: 11px;
  fill: none;
  stroke: #fff;
  stroke-width: 1.7;
}

.vb .fill {
  fill: #fff;
  stroke: none;
}

.viewer-pill {
  position: absolute;
  left: 578px;
  top: 694px;
  width: 27px;
  height: 3px;
  background: #e8e8e8;
}

.scribble {
  position: absolute;
  left: 81px;
  top: 112px;
}
</style>
